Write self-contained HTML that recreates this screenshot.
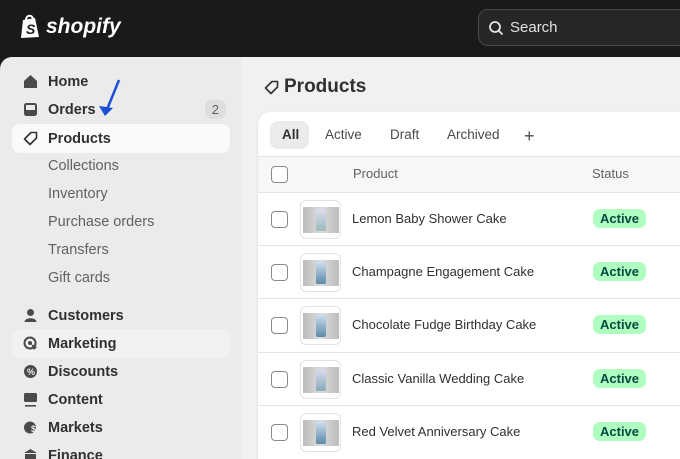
<!DOCTYPE html>
<html><head><style>
*{margin:0;padding:0;box-sizing:border-box}
html,body{width:680px;height:459px;overflow:hidden}
body{background:#1a1a1a;font-family:"Liberation Sans",sans-serif;position:relative}
.top{position:absolute;left:0;top:0;width:680px;height:57px;background:#1a1a1a}
.logo{position:absolute;left:20px;top:14px;color:#fff;font-weight:bold;font-style:italic;font-size:21px;display:flex;align-items:center;gap:4px}
.search{position:absolute;left:478px;top:9px;width:220px;height:37px;border:1px solid #4a4a4a;border-radius:10px;background:#262626;color:#e3e3e3;font-size:15px;padding:9px 0 0 31px}
.search svg{position:absolute;left:9px;top:10px}
.side{position:absolute;left:0;top:57px;width:241px;height:402px;background:#ebebeb;border-top-left-radius:12px}
.main{position:absolute;left:241px;top:57px;width:439px;height:402px;background:#f1f1f1}
.ni{position:absolute;left:12px;width:218px;height:29px;display:flex;align-items:center;font-size:14.5px;color:#303030;font-weight:bold}
.ni .ic{width:36px;display:flex;justify-content:center}
.sub{position:absolute;left:48px;font-size:14.5px;color:#616161}
.card{position:absolute;left:258px;top:112px;width:440px;height:347px;background:#fff;border-radius:12px 12px 0 0;box-shadow:0 1px 2px rgba(0,0,0,.15)}
.tab{position:absolute;top:127px;font-size:13.5px;color:#4a4a4a}
.row{position:absolute;left:258px;width:430px;border-top:1px solid #e3e3e3}
.cb{position:absolute;left:271px;width:17px;height:17px;border:1.5px solid #8a8a8a;border-radius:4px;background:#fff}
.th{position:absolute;left:300px;width:41px;height:39px;border:1px solid #e3e3e3;border-radius:6px;background:#fff;overflow:hidden}
.th i{position:absolute;left:2px;top:6px;width:36px;height:26px;background:linear-gradient(90deg,#bbb,#ddd,#bbb)}
.th b{position:absolute;left:15px;top:8px;width:10px;height:22px;background:linear-gradient(#cde,#5a8aa8);border-radius:2px}
.pn{position:absolute;left:352px;font-size:13px;color:#303030}
.bd{position:absolute;left:593px;background:#affebf;color:#014b40;font-weight:bold;font-size:13px;padding:2px 7px;border-radius:7px}
</style></head><body>
<div class="top">
<div class="logo"><svg width="22" height="25" viewBox="0 0 22 25"><path d="M3 6 L15 4 L19 23 L1 24 Z" fill="#fff"/><path d="M6 6 C6 1 12 0 13 5" stroke="#fff" stroke-width="2" fill="none"/><text x="6" y="20" font-size="14" font-weight="bold" fill="#1a1a1a" font-family="Liberation Sans">S</text></svg>shopify</div>
<div class="search"><svg width="16" height="16" viewBox="0 0 16 16"><circle cx="7" cy="7" r="5" stroke="#e3e3e3" stroke-width="1.8" fill="none"/><path d="M11 11 L14.5 14.5" stroke="#e3e3e3" stroke-width="1.8"/></svg>Search</div>
</div>
<div class="side"></div>
<div class="main"></div>
<div class="ni" style="top:67px"><span class="ic"><svg width="15" height="15" viewBox="0 0 15 15"><path d="M1 7 L7.5 1 L14 7 V14 H1 Z" fill="#4a4a4a"/></svg></span>Home</div>
<div class="ni" style="top:95px"><span class="ic"><svg width="15" height="15" viewBox="0 0 15 15"><rect x="1" y="1" width="13" height="13" rx="2.5" fill="#4a4a4a"/><rect x="3" y="3" width="9" height="5" fill="#ebebeb"/></svg></span>Orders<span style="position:absolute;right:4px;background:#dedede;border-radius:7px;padding:2px 7px;font-weight:normal;font-size:13px;color:#616161">2</span></div>
<div class="ni" style="top:124px;background:#fafafa;border-radius:8px"><span class="ic"><svg width="15" height="15" viewBox="0 0 15 15"><path d="M8 1.5 H13.5 V7 L7 13.5 L1.5 8 Z" fill="none" stroke="#303030" stroke-width="1.6" stroke-linejoin="round"/></svg></span>Products</div>
<svg style="position:absolute;left:96px;top:78px" width="26" height="40" viewBox="0 0 26 40"><path d="M23 2 L10 34" stroke="#1a4fd6" stroke-width="2.5"/><path d="M3 28 L9 38 L17 30 Z" fill="#1a4fd6"/></svg>
<div class="sub" style="top:158px">Collections</div>
<div class="sub" style="top:186px">Inventory</div>
<div class="sub" style="top:214px">Purchase orders</div>
<div class="sub" style="top:242px">Transfers</div>
<div class="sub" style="top:270px">Gift cards</div>
<div class="ni" style="top:301px"><span class="ic"><svg width="15" height="15" viewBox="0 0 15 15"><circle cx="7.5" cy="4.5" r="3.5" fill="#4a4a4a"/><path d="M1.5 14 C1.5 9 13.5 9 13.5 14 Z" fill="#4a4a4a"/></svg></span>Customers</div>
<div class="ni" style="top:329px;background:#f1f1f1;border-radius:8px"><span class="ic"><svg width="15" height="15" viewBox="0 0 15 15"><circle cx="7" cy="7" r="5.5" stroke="#4a4a4a" stroke-width="2" fill="none"/><circle cx="7" cy="7" r="2" fill="#4a4a4a"/><path d="M8 8 L14 11 L11 14 Z" fill="#4a4a4a"/></svg></span>Marketing</div>
<div class="ni" style="top:357px"><span class="ic"><svg width="15" height="15" viewBox="0 0 15 15"><circle cx="7.5" cy="7.5" r="6.5" fill="#4a4a4a"/><text x="4" y="11" font-size="9" fill="#ebebeb" font-family="Liberation Sans">%</text></svg></span>Discounts</div>
<div class="ni" style="top:385px"><span class="ic"><svg width="15" height="15" viewBox="0 0 15 15"><rect x="1" y="1" width="13" height="9" rx="1.5" fill="#4a4a4a"/><rect x="2" y="13" width="11" height="1.6" fill="#4a4a4a"/></svg></span>Content</div>
<div class="ni" style="top:413px"><span class="ic"><svg width="15" height="15" viewBox="0 0 15 15"><circle cx="7" cy="7.5" r="6" fill="#4a4a4a"/><text x="8" y="12" font-size="9" fill="#ebebeb" font-family="Liberation Sans">$</text></svg></span>Markets</div>
<div class="ni" style="top:441px"><span class="ic"><svg width="15" height="15" viewBox="0 0 15 15"><path d="M1 5 L7.5 1 L14 5 Z M2 6 H13 V14 H2 Z" fill="#4a4a4a"/></svg></span>Finance</div>

<div style="position:absolute;left:264px;top:76px;font-size:19px;font-weight:bold;color:#303030;display:flex;align-items:center;gap:5px"><svg width="15" height="15" viewBox="0 0 15 15"><path d="M8 1.5 H13.5 V7 L7 13.5 L1.5 8 Z" fill="none" stroke="#303030" stroke-width="1.6" stroke-linejoin="round"/></svg>Products</div>
<div class="card"></div>
<div style="position:absolute;left:270px;top:121px;width:39px;height:28px;background:#ebebeb;border-radius:8px"></div>
<div class="tab" style="left:282px;color:#303030;font-weight:bold">All</div>
<div class="tab" style="left:325px">Active</div>
<div class="tab" style="left:390px">Draft</div>
<div class="tab" style="left:447px">Archived</div>
<div class="tab" style="left:524px;font-size:18px;top:128px;line-height:16px">+</div>
<div class="row" style="top:156px;height:37px;background:#f7f7f7;border-bottom:1px solid #e3e3e3"></div>
<div class="cb" style="top:166px"></div>
<div style="position:absolute;left:353px;top:166px;font-size:13px;color:#616161">Product</div>
<div style="position:absolute;left:592px;top:166px;font-size:13px;color:#616161">Status</div>

<div class="row" style="top:245px"></div><div class="row" style="top:298px"></div><div class="row" style="top:352px"></div><div class="row" style="top:405px"></div>

<div class="cb" style="top:211px"></div><div class="th" style="top:200px"><i></i><b style="background:linear-gradient(#dde,#9bb)"></b></div><div class="pn" style="top:211px">Lemon Baby Shower Cake</div><div class="bd" style="top:209px">Active</div>
<div class="cb" style="top:264px"></div><div class="th" style="top:253px"><i></i><b></b></div><div class="pn" style="top:264px">Champagne Engagement Cake</div><div class="bd" style="top:262px">Active</div>
<div class="cb" style="top:317px"></div><div class="th" style="top:306px"><i></i><b></b></div><div class="pn" style="top:317px">Chocolate Fudge Birthday Cake</div><div class="bd" style="top:315px">Active</div>
<div class="cb" style="top:371px"></div><div class="th" style="top:360px"><i></i><b style="background:linear-gradient(#dde,#8ab)"></b></div><div class="pn" style="top:371px">Classic Vanilla Wedding Cake</div><div class="bd" style="top:369px">Active</div>
<div class="cb" style="top:424px"></div><div class="th" style="top:413px"><i></i><b></b></div><div class="pn" style="top:424px">Red Velvet Anniversary Cake</div><div class="bd" style="top:422px">Active</div>
</body></html>
